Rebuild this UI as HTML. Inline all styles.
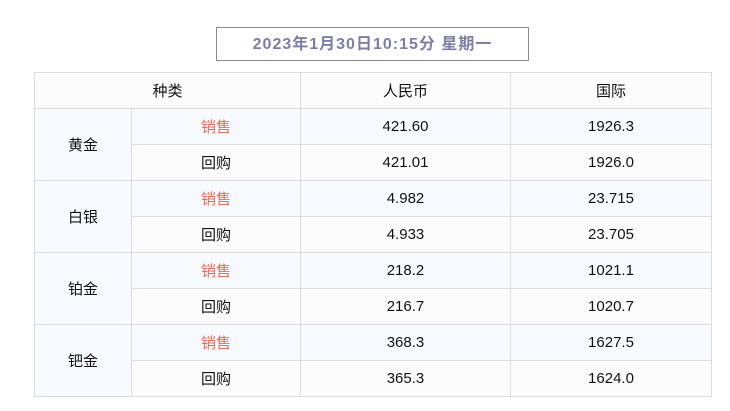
<html><head><style>
body{margin:0;background:#fff;width:730px;height:411px;position:relative;font-family:"Liberation Sans","Noto Sans CJK SC",sans-serif;}
.t{position:absolute;left:216px;top:27px;width:311px;height:32px;border:1px solid #8a8a8a;text-align:center;line-height:33px;font-size:16px;font-weight:bold;color:#7b7ea8;letter-spacing:1px}
table{position:absolute;left:34px;top:72px;border-collapse:collapse;font-size:15px;color:#111}
td{border:1px solid #dcdcdc;text-align:center;height:36px;padding:0}
.h td{background:#fcfcfc}
.s td{background:#f7faff}
.b td{background:#fcfcfc}
td.c{background:#f7faff}
.r{color:#f26a50}
</style></head><body>
<div class="t">2023年1月30日10:15分 星期一</div>
<table>
<tr class="h"><td colspan="2" style="width:265px">种类</td><td style="width:209px">人民币</td><td style="width:200px">国际</td></tr>
<tr class="s"><td class="c" rowspan="2" style="width:96px">黄金</td><td class="r" style="width:168px">销售</td><td>421.60</td><td>1926.3</td></tr>
<tr class="b"><td>回购</td><td>421.01</td><td>1926.0</td></tr>
<tr class="s"><td class="c" rowspan="2">白银</td><td class="r">销售</td><td>4.982</td><td>23.715</td></tr>
<tr class="b"><td>回购</td><td>4.933</td><td>23.705</td></tr>
<tr class="s"><td class="c" rowspan="2">铂金</td><td class="r">销售</td><td>218.2</td><td>1021.1</td></tr>
<tr class="b"><td>回购</td><td>216.7</td><td>1020.7</td></tr>
<tr class="s"><td class="c" rowspan="2">钯金</td><td class="r">销售</td><td>368.3</td><td>1627.5</td></tr>
<tr class="b"><td>回购</td><td>365.3</td><td>1624.0</td></tr>
</table>
</body></html>
